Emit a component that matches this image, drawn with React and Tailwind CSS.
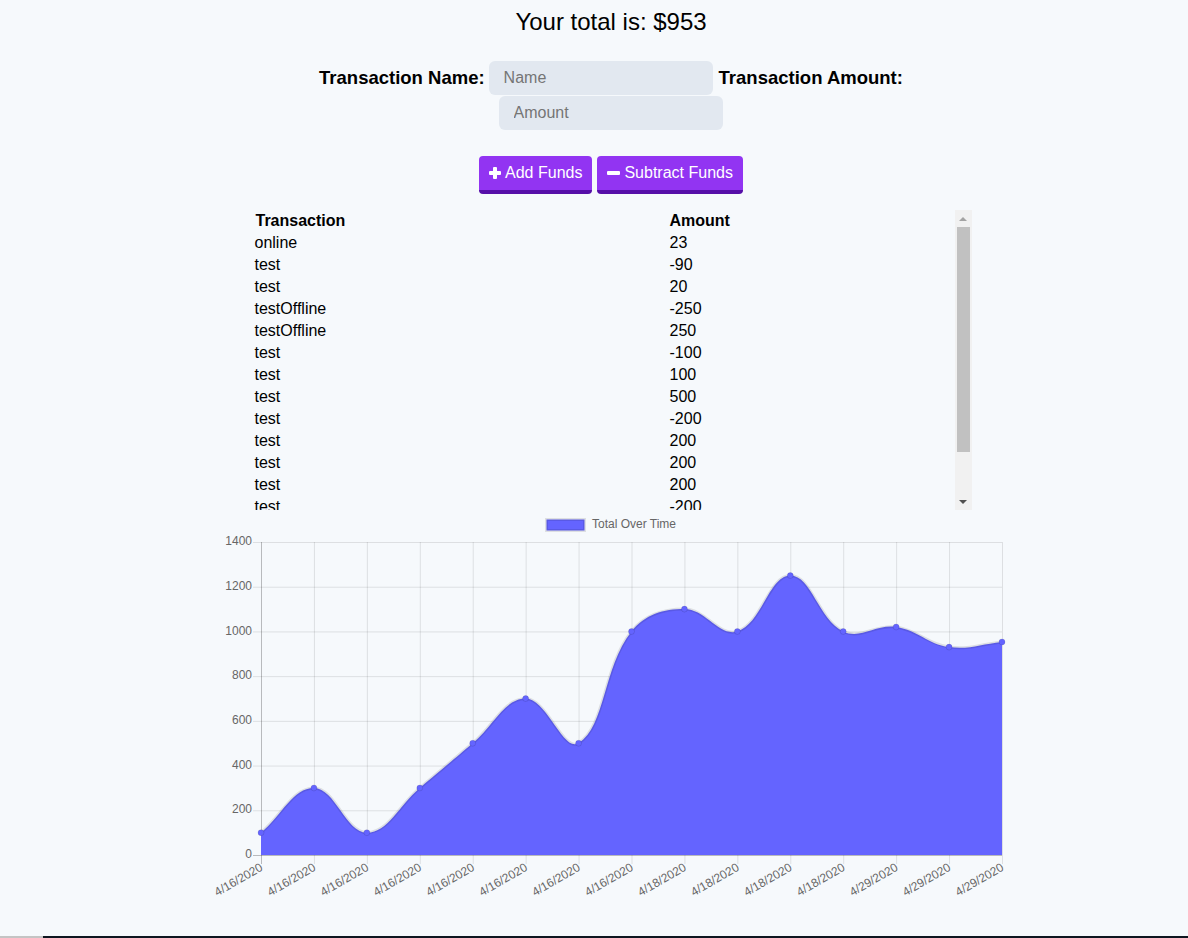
import React from 'react';

const transactions = [
  { name: 'online', value: 23 },
  { name: 'test', value: -90 },
  { name: 'test', value: 20 },
  { name: 'testOffline', value: -250 },
  { name: 'testOffline', value: 250 },
  { name: 'test', value: -100 },
  { name: 'test', value: 100 },
  { name: 'test', value: 500 },
  { name: 'test', value: -200 },
  { name: 'test', value: 200 },
  { name: 'test', value: 200 },
  { name: 'test', value: 200 },
  { name: 'test', value: -200 },
  { name: 'test', value: 200 },
  { name: 'test', value: 100 },
];

const dates = [
  '4/16/2020', '4/16/2020', '4/16/2020', '4/16/2020', '4/16/2020', '4/16/2020', '4/16/2020', '4/16/2020',
  '4/18/2020', '4/18/2020', '4/18/2020', '4/18/2020',
  '4/29/2020', '4/29/2020', '4/29/2020',
];

// chart area in page coordinates
const area = { left: 261, right: 1002, top: 542, bottom: 855 };
const yMax = 1400;
const yPx = (v) => area.bottom - (v / yMax) * (area.bottom - area.top);

function splinePath(pts, tension = 0.4) {
  const cps = pts.map((p, i) => {
    const prev = pts[i - 1] || p;
    const next = pts[i + 1] || p;
    const d01 = Math.hypot(p.x - prev.x, p.y - prev.y);
    const d12 = Math.hypot(next.x - p.x, next.y - p.y);
    let s01 = d01 / (d01 + d12);
    let s12 = d12 / (d01 + d12);
    if (isNaN(s01)) s01 = 0;
    if (isNaN(s12)) s12 = 0;
    const fa = tension * s01;
    const fb = tension * s12;
    const clampX = (x) => Math.min(Math.max(x, area.left), area.right);
    const clampY = (y) => Math.min(Math.max(y, area.top), area.bottom);
    return {
      px: clampX(p.x - fa * (next.x - prev.x)),
      py: clampY(p.y - fa * (next.y - prev.y)),
      nx: clampX(p.x + fb * (next.x - prev.x)),
      ny: clampY(p.y + fb * (next.y - prev.y)),
    };
  });
  let d = `M${pts[0].x},${pts[0].y}`;
  for (let i = 1; i < pts.length; i++) {
    d += ` C${cps[i - 1].nx},${cps[i - 1].ny} ${cps[i].px},${cps[i].py} ${pts[i].x},${pts[i].y}`;
  }
  return d;
}

function Chart() {
  let sum = 0;
  const totals = [...transactions].reverse().map((t) => (sum += t.value));
  const step = (area.right - area.left) / (totals.length - 1);
  const pts = totals.map((v, i) => ({ x: area.left + i * step, y: yPx(v) }));
  const line = splinePath(pts);
  const fill = `${line} L${area.right},${area.bottom} L${area.left},${area.bottom} Z`;
  const yTicks = [0, 200, 400, 600, 800, 1000, 1200, 1400];

  return (
    <svg width="1188" height="400" className="block" style={{ fontFamily: '"Liberation Sans", Arial, sans-serif' }}>
      <g transform="translate(0,-510)">
        {/* legend */}
        <rect x="546.5" y="519.5" width="38" height="11" fill="#6464ff" stroke="rgba(0,0,0,0.1)" strokeWidth="3" />
        <text x="592" y="525" fontSize="12" fill="#666" dominantBaseline="middle">Total Over Time</text>

        {/* grid */}
        {yTicks.map((v) => (
          <line key={v} x1={area.left - 8} x2={area.right} y1={yPx(v) + 0.5} y2={yPx(v) + 0.5}
            stroke={v === 0 ? 'rgba(0,0,0,0.25)' : 'rgba(0,0,0,0.1)'} strokeWidth="1" />
        ))}
        {pts.map((p, i) => (
          <line key={i} x1={p.x + 0.5} x2={p.x + 0.5} y1={area.top} y2={area.bottom + 9}
            stroke={i === 0 ? 'rgba(0,0,0,0.25)' : 'rgba(0,0,0,0.1)'} strokeWidth="1" />
        ))}

        {/* y labels */}
        {yTicks.map((v) => (
          <text key={v} x="252" y={yPx(v)} fontSize="12" fill="#666" textAnchor="end" dominantBaseline="middle">{v}</text>
        ))}

        {/* x labels */}
        {pts.map((p, i) => (
          <text key={i} x={p.x + 1} y={867} fontSize="12" fill="#666" textAnchor="end" dominantBaseline="middle"
            transform={`rotate(-30 ${p.x + 1} 867)`}>{dates[i]}</text>
        ))}

        {/* data */}
        <path d={fill} fill="#6464ff" />
        <path d={line} fill="none" stroke="rgba(0,0,0,0.1)" strokeWidth="3" />
        {pts.map((p, i) => (
          <circle key={i} cx={p.x} cy={p.y} r="3" fill="#6464ff" stroke="rgba(0,0,0,0.1)" strokeWidth="1" />
        ))}
      </g>
    </svg>
  );
}

function PlusIcon() {
  return (
    <svg width="12" height="12" viewBox="0 0 12 12">
      <rect x="4" y="0" width="4" height="12" rx="1" fill="white" />
      <rect x="0" y="4" width="12" height="4" rx="1" fill="white" />
    </svg>
  );
}

function MinusIcon() {
  return (
    <svg width="13" height="12" viewBox="0 0 13 12">
      <rect x="0" y="4" width="13" height="4" rx="1" fill="white" />
    </svg>
  );
}

export default function App() {
  return (
    <div className="min-h-screen flex flex-col bg-[#f6f9fc] text-black" style={{ fontFamily: '"Liberation Sans", Arial, sans-serif' }}>
      <div className="pl-[34px]">
        <h1 className="pt-[8px] text-center text-[24px] leading-[28px] font-normal">Your total is: $953</h1>

        <div className="mt-[25px] flex justify-center items-center">
          <label className="text-[18.5px] font-bold">Transaction Name:</label>
          <input
            placeholder="Name"
            className="ml-[4px] w-[224px] h-[34px] rounded-[6px] bg-[#e2e8f0] pl-[15px] text-[16px] outline-none placeholder:text-[#757575]"
          />
          <label className="ml-[6px] text-[18.5px] font-bold">Transaction Amount:</label>
        </div>
        <div className="mt-[1px] flex justify-center pr-[1px]">
          <input
            placeholder="Amount"
            className="w-[224px] h-[34px] rounded-[6px] bg-[#e2e8f0] pl-[15px] text-[16px] outline-none placeholder:text-[#757575]"
          />
        </div>

        <div className="mt-[26px] flex justify-center gap-[5px]">
          <button className="h-[38px] flex items-center px-[10px] rounded-[4px] bg-[#9234f2] border-b-4 border-[#560fa8] text-white text-[16px]">
            <PlusIcon />
            <span className="ml-[4px]">Add Funds</span>
          </button>
          <button className="h-[38px] flex items-center px-[10px] rounded-[4px] bg-[#9234f2] border-b-4 border-[#560fa8] text-white text-[16px]">
            <MinusIcon />
            <span className="ml-[4px]">Subtract Funds</span>
          </button>
        </div>

        <div className="mt-[16px] mx-auto w-[721px] h-[300px] flex">
          <div className="flex-1 overflow-hidden">
            <table className="w-full text-[16px] leading-[22px]">
              <thead>
                <tr className="h-[22px]">
                  <th className="w-[419px] pl-[5px] text-left font-bold">Transaction</th>
                  <th className="text-left font-bold">Amount</th>
                </tr>
              </thead>
              <tbody>
                {transactions.map((t, i) => (
                  <tr key={i} className="h-[22px]">
                    <td className="pl-[4px]">{t.name}</td>
                    <td>{t.value}</td>
                  </tr>
                ))}
              </tbody>
            </table>
          </div>
          <div className="w-[17px] flex flex-col bg-[#f1f1f1]">
            <div className="h-[17px] flex items-center justify-center">
              <div className="w-0 h-0 border-x-[4px] border-x-transparent border-b-[4px] border-b-[#a3a3a3]" />
            </div>
            <div className="mx-[2px] h-[225px] bg-[#c1c1c1]" />
            <div className="flex-1" />
            <div className="h-[17px] flex items-center justify-center">
              <div className="w-0 h-0 border-x-[4px] border-x-transparent border-t-[4px] border-t-[#505050]" />
            </div>
          </div>
        </div>
      </div>

      <Chart />

      <div className="mt-auto h-[2px] flex">
        <div className="w-[43px] bg-[#c4c4c4]" />
        <div className="flex-1 bg-[#0e1620]" />
      </div>
    </div>
  );
}
